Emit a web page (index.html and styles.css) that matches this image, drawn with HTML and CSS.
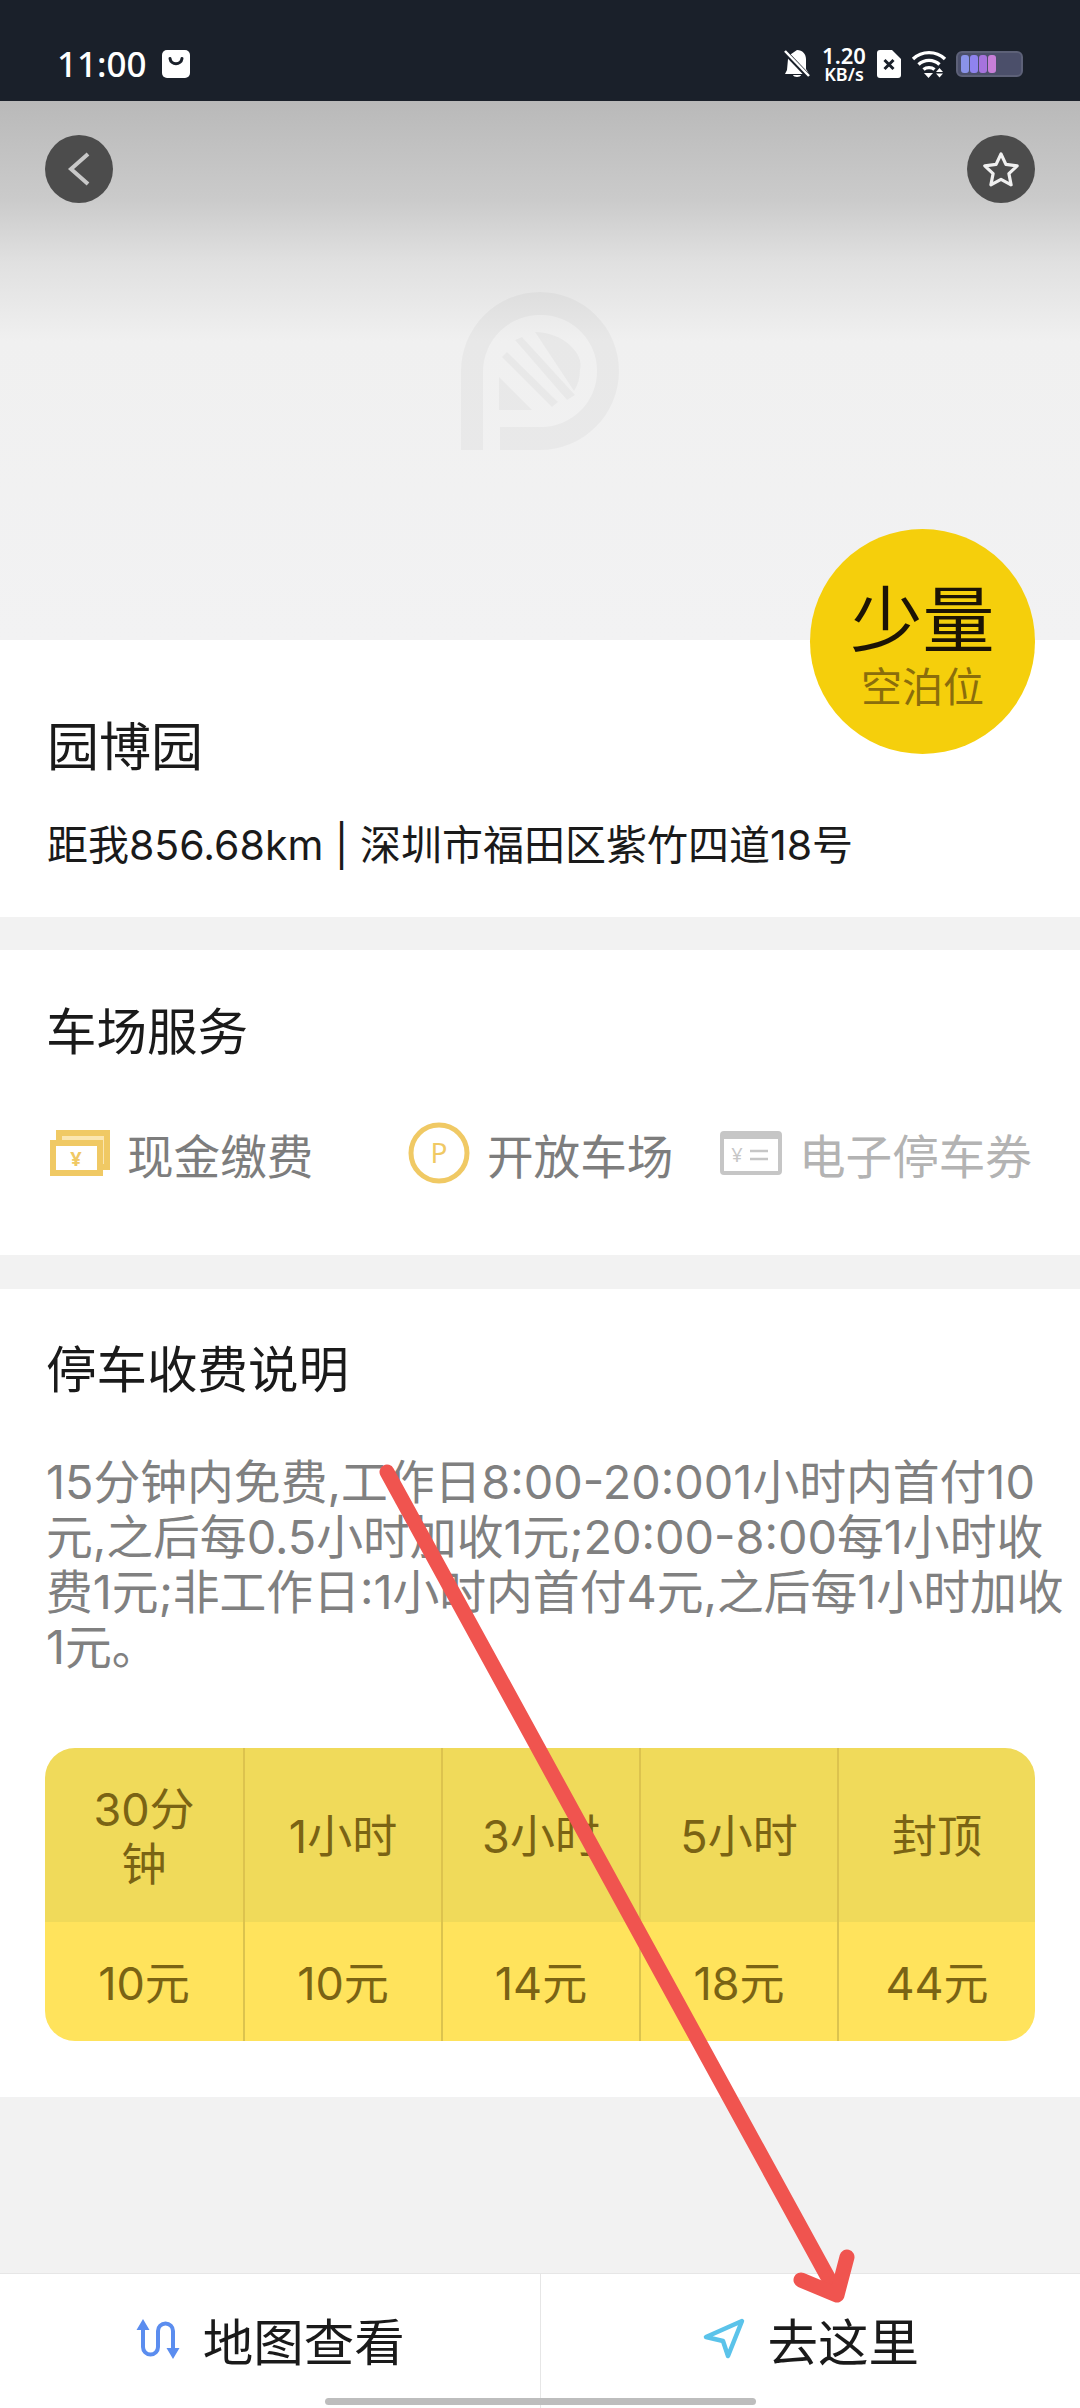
FILE: index.html
```html
<!DOCTYPE html>
<html lang="zh-CN">
<head>
  <meta charset="UTF-8">
  <title>园博园</title>
  <link rel="stylesheet" href="styles.css">
</head>
<body>
  <div class="page">

    <div class="statusbar">
      <div class="status-left">
        <span class="time">11:00</span>
        <svg class="bag" width="28" height="28" viewBox="0 0 28 28">
          <rect width="28" height="28" rx="5" fill="#fff"/>
          <path d="M8 8.500c1 7 11 7 12 0" fill="none" stroke="#1a202a" stroke-width="3" stroke-linecap="round"/>
        </svg>
      </div>
      <div class="status-right">
        <svg class="bell" width="26" height="30" viewBox="0 0 26 30">
          <path d="M13 1c5.500 0 9 4 9 9v10l3 5H1l2-4 1-11c0-1 .5-2.500 1-3.500z" fill="#fff"/>
          <path d="M9 26h8c-.5 2.500-7.500 2.500-8 0z" fill="#fff"/>
          <path d="M1 3l24 25" stroke="#1a202a" stroke-width="5"/>
          <path d="M1 2l24 25" stroke="#fff" stroke-width="2.500"/>
        </svg>
        <div class="speed">
          <span class="speed-num">1.20</span>
          <span class="speed-unit">KB/s</span>
        </div>
        <svg class="sim" width="24" height="28" viewBox="0 0 24 28">
          <path d="M3 0h12l9 9v16a3 3 0 0 1-3 3H3a3 3 0 0 1-3-3V3a3 3 0 0 1 3-3z" fill="#fff"/>
          <path d="M7.500 10l9 9M16.500 10l-9 9" stroke="#1a202a" stroke-width="3"/>
        </svg>
        <svg class="wifi" width="36" height="28" viewBox="0 0 36 28">
          <path d="M2 9c9-8.500 23-8.500 32 0M7.500 14.500c6-5.500 15-5.500 21 0M12.500 19.500c3-2.500 8-2.500 11 0" fill="none" stroke="#fff" stroke-width="3.400"/>
          <path d="M13 23h9l-4.500 5z" fill="#fff"/>
          <path d="M28.500 18l-3.500 4h7zM25 23.500h7l-3.500 4z" fill="#fff"/>
        </svg>
        <div class="battery">
          <span class="cell c1"></span><span class="cell c2"></span><span class="cell c3"></span><span class="cell c4"></span>
        </div>
      </div>
    </div>

    <div class="hero">
      <div class="hero-top">
        <div class="round-btn">
          <svg width="24" height="36" viewBox="0 0 24 36"><path d="M21 3L4 18l17 15" fill="none" stroke="#c8c8c8" stroke-width="4"/></svg>
        </div>
        <div class="round-btn">
          <svg width="38" height="36" viewBox="0 0 38 36"><path d="M19 3l4.900 10.400 11.300 1.400-8.300 7.800 2.200 11.200L19 28.300 8.900 33.800l2.200-11.200-8.300-7.800 11.300-1.400z" fill="none" stroke="#f0f0f0" stroke-width="3.200" stroke-linejoin="round"/></svg>
        </div>
      </div>
      <svg class="hero-logo" width="158" height="158" viewBox="0 0 158 158">
        <path class="logo-part" d="M0 158V80A79 79 0 0 1 79 0a79 79 0 0 1 0 158H39v-23h41a56 56 0 0 0 0-112A57 57 0 0 0 22 80v78z"/>
        <path class="logo-part" d="M74 40c28 0 50 22 45 38 0 8-2 15-6 21z"/>
        <path class="logo-part" d="M54 48l7-3 53 58-8 5z"/>
        <path class="logo-part" d="M41 65l5-5 51 50-6 5z"/>
        <path class="logo-part" d="M38 85l33 33H38z"/>
      </svg>
      <div class="badge">
        <span class="badge-big">少量</span>
        <span class="badge-small">空泊位</span>
      </div>
    </div>

    <div class="info">
      <div class="info-name">园博园</div>
      <div class="info-addr">距我856.68km | 深圳市福田区紫竹四道18号</div>
    </div>

    <div class="services">
      <div class="section-title">车场服务</div>
      <div class="service-row">
        <div class="service">
          <svg width="60" height="46" viewBox="0 0 60 46">
            <path d="M9 10V3h48v34h-6" fill="#fbe6b0" stroke="#f0c964" stroke-width="6"/>
            <rect x="3" y="13" width="47" height="30" fill="#fff" stroke="#f0c964" stroke-width="6"/>
            <text x="26" y="36" class="icon-text cash-text">¥</text>
          </svg>
          <span>现金缴费</span>
        </div>
        <div class="service">
          <svg width="62" height="62" viewBox="0 0 62 62">
            <circle cx="31" cy="31" r="28" fill="none" stroke="#f0c964" stroke-width="5"/>
            <text x="31" y="41" class="icon-text p-text">P</text>
          </svg>
          <span>开放车场</span>
        </div>
        <div class="service service-off">
          <svg width="62" height="44" viewBox="0 0 62 44">
            <rect x="2" y="2" width="58" height="40" rx="2" fill="none" stroke="#c6c6c6" stroke-width="4"/>
            <path d="M2 5h58" stroke="#c6c6c6" stroke-width="6"/>
            <text x="17" y="31" class="icon-text off-text">¥</text>
            <path d="M30 20h18M30 28h18" stroke="#c6c6c6" stroke-width="2.500"/>
          </svg>
          <span>电子停车券</span>
        </div>
      </div>
    </div>

    <div class="fees">
      <div class="section-title">停车收费说明</div>
      <p class="fee-text">15分钟内免费,工作日8:00-20:001小时内首付10<br>元,之后每0.5小时加收1元;20:00-8:00每1小时收<br>费1元;非工作日:1小时内首付4元,之后每1小时加收<br>1元。</p>
      <div class="fee-table">
        <div class="th">30分钟</div>
        <div class="th">1小时</div>
        <div class="th">3小时</div>
        <div class="th">5小时</div>
        <div class="th">封顶</div>
        <div class="td">10元</div>
        <div class="td">10元</div>
        <div class="td">14元</div>
        <div class="td">18元</div>
        <div class="td">44元</div>
      </div>
    </div>

    <div class="spacer"></div>

    <div class="bottom-bar">
      <div class="bottom-btn">
        <svg width="46" height="40" viewBox="0 0 46 40">
          <path d="M8 8v20a7.500 7.500 0 0 0 15 0V12a7.500 7.500 0 0 1 15 0v20" fill="none" stroke="#5b8def" stroke-width="4"/>
          <path d="M8 0l6.500 11h-13zM38 40l-6.500-11h13z" fill="#5b8def"/>
        </svg>
        <span>地图查看</span>
      </div>
      <div class="bottom-btn">
        <svg width="44" height="42" viewBox="0 0 44 42">
          <path d="M40 3L4 19l17 4 5 15z" fill="none" stroke="#5bc3ea" stroke-width="4.500" stroke-linejoin="round"/>
        </svg>
        <span>去这里</span>
      </div>
      <div class="home-bar"></div>
    </div>

    <svg class="arrow" width="1080" height="2408" viewBox="0 0 1080 2408">
      <path d="M387 1472L836 2292" stroke="#f0544f" stroke-width="15" stroke-linecap="round" fill="none"/>
      <path d="M801 2280l36 15 10-38" stroke="#f0544f" stroke-width="15" stroke-linecap="round" stroke-linejoin="round" fill="none"/>
    </svg>
  </div>
</body>
</html>
```

FILE: styles.css
```css
* { box-sizing: border-box; }
body {
  margin: 0;
  font-family: Inter, "Noto Sans CJK SC", sans-serif;
  background: #f2f2f2;
  color: #1a1a1a;
}
.page {
  position: relative;
  width: 1080px;
  height: 2408px;
  display: flex;
  flex-direction: column;
  overflow: hidden;
}

/* status bar */
.statusbar {
  height: 101px;
  flex: none;
  background: #1a202a;
  color: #fff;
  display: flex;
  justify-content: space-between;
  align-items: flex-start;
  padding: 46px 57px 0 57px;
}
.status-left {
  display: flex;
  align-items: center;
  gap: 15px;
  height: 36px;
}
.time {
  font-family: "Noto Sans", sans-serif;
  font-size: 35px;
  font-weight: 500;
  line-height: 36px;
}
.status-right {
  display: flex;
  align-items: center;
  height: 36px;
}
.bell { margin-right: 12px; }
.speed {
  display: flex;
  flex-direction: column;
  align-items: center;
  width: 44px;
  font-family: "Noto Sans", sans-serif;
  font-weight: 600;
  margin-right: 11px;
}
.speed-num { font-size: 22px; line-height: 21px; }
.speed-unit { font-size: 18px; line-height: 17px; }
.sim { margin-right: 10px; }
.wifi { margin-right: 9px; }
.battery {
  width: 67px;
  height: 26px;
  border-radius: 6px;
  background: #4b4f6a;
  border: 2px solid #5d6178;
  display: flex;
  align-items: center;
  gap: 1px;
  padding: 0 3px;
}
.cell { width: 8px; height: 18px; border-radius: 3px; }
.c1 { background: #8a93e8; }
.c2 { background: #8f83ee; }
.c3 { background: #a673dd; }
.c4 { background: #c77fd8; }

/* hero */
.hero {
  position: relative;
  height: 539px;
  flex: none;
  background: linear-gradient(180deg, #b9b9b9 0, #cbcbcb 100px, #e0e0e0 160px, #f0f0f0 240px, #f2f2f3 100%);
}
.hero-top {
  display: flex;
  justify-content: space-between;
  padding: 34px 45px 0 45px;
}
.round-btn {
  width: 68px;
  height: 68px;
  border-radius: 50%;
  background: #4c4c4c;
  display: flex;
  align-items: center;
  justify-content: center;
}
.hero-logo {
  display: block;
  margin: 89px 0 0 461px;
}
.logo-part { fill: rgba(0, 0, 0, 0.03); }
.badge {
  position: absolute;
  left: 810px;
  top: 428px;
  width: 225px;
  height: 225px;
  border-radius: 50%;
  background: #f5cf0c;
  display: flex;
  flex-direction: column;
  align-items: center;
  padding-top: 48px;
}
.badge-big { font-size: 72px; line-height: 86px; color: #1c1405; }
.badge-small { font-size: 41px; line-height: 48px; color: #8a6d0c; }

/* info */
.info {
  height: 277px;
  flex: none;
  background: #fff;
  padding: 78px 0 0 47px;
  margin-bottom: 33px;
}
.info-name { font-size: 52px; line-height: 60px; }
.info-addr { font-size: 41px; line-height: 50px; margin-top: 42px; }

/* services */
.services {
  height: 305px;
  flex: none;
  background: #fff;
  padding: 52px 0 0 46px;
  margin-bottom: 34px;
}
.section-title { font-size: 50.5px; line-height: 60px; }
.service-row {
  display: flex;
  margin: 60px 0 0 4px;
  height: 62px;
  align-items: center;
}
.service {
  display: flex;
  align-items: center;
  gap: 17px;
  font-size: 46.6px;
  color: #7d7d7d;
}
.service:nth-child(1) { width: 358px; }
.service:nth-child(2) { width: 312px; }
.service-off { color: #b3b3b3; }
.icon-text { text-anchor: middle; font-family: "Noto Sans", sans-serif; }
.cash-text { font-size: 20px; font-weight: 700; fill: #f0c964; }
.p-text { font-size: 28px; fill: #f0c964; }
.off-text { font-size: 20px; fill: #c6c6c6; }

/* fees */
.fees {
  height: 808px;
  flex: none;
  background: #fff;
  padding: 51px 0 0 46px;
}
.fee-text {
  margin: 55px 0 0 0;
  font-size: 46.8px;
  line-height: 55px;
  color: #808080;
  white-space: nowrap;
}
.fee-table {
  margin: 73px 0 0 -1px;
  width: 990px;
  height: 293px;
  border-radius: 30px;
  overflow: hidden;
  display: grid;
  grid-template-columns: repeat(5, 1fr);
  grid-template-rows: 174px 119px;
  font-size: 45px;
  color: #7a6314;
  text-align: center;
}
.th, .td {
  display: flex;
  align-items: center;
  justify-content: center;
  padding: 3px 32px 0 32px;
  line-height: 55px;
  border-left: 2px solid #dcc34e;
}
.th { background: #f0da5a; }
.td { background: #ffe35c; }
.th:nth-child(5n+1), .td:nth-child(5n+1) { border-left: none; }

/* bottom */
.spacer { flex: 1; background: #f2f2f2; }
.bottom-bar {
  position: relative;
  height: 135px;
  flex: none;
  background: #fff;
  border-top: 1px solid #e6e6e6;
  display: flex;
}
.bottom-btn {
  flex: 1;
  display: flex;
  align-items: center;
  justify-content: center;
  gap: 22px;
  font-size: 50.5px;
  color: #1a1a1a;
  padding-bottom: 4px;
}
.bottom-btn + .bottom-btn { border-left: 1px solid #e6e6e6; }
.home-bar {
  position: absolute;
  left: 325px;
  bottom: 3px;
  width: 431px;
  height: 7px;
  border-radius: 4px;
  background: #bdbdbd;
}

/* the red hand-drawn arrow on top of the screenshot */
.arrow {
  position: absolute;
  left: 0;
  top: 0;
}
```
